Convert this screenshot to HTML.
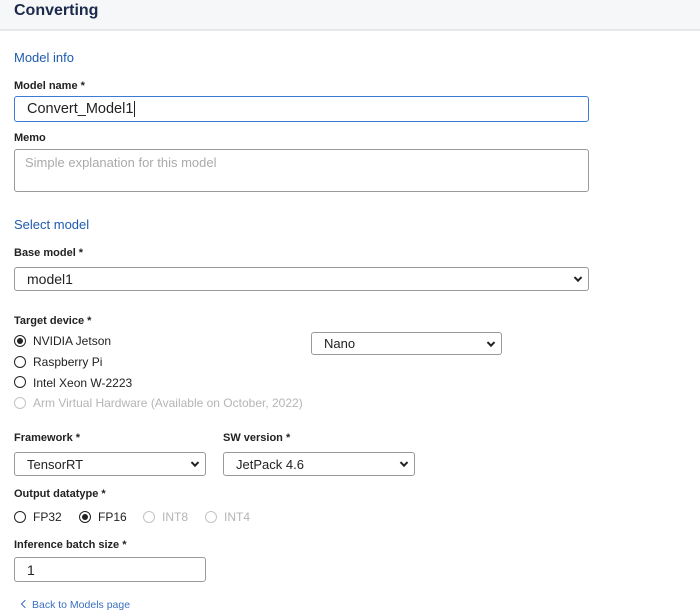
<!DOCTYPE html>
<html><head><style>
body{margin:0;width:700px;height:614px;background:#fff;font-family:"Liberation Sans",Arial,sans-serif;position:relative;overflow:hidden;color:#222}
.a{position:absolute;white-space:nowrap}
.hdr{position:absolute;left:0;top:0;width:700px;height:29px;background:#f6f7f9;border-bottom:2px solid #e6e8ec}
.t{left:14px;top:2px;font-size:16px;font-weight:bold;color:#1b2a4a}
.sec{font-size:13px;color:#1e5bb0}
.lbl{font-size:11px;font-weight:bold;color:#222}
.box{position:absolute;border:1px solid #999;border-radius:3px;box-sizing:border-box;font-size:13px;color:#222;padding-left:12px;display:flex;align-items:center}
.chev{position:absolute;right:7px;top:50%;width:4px;height:4px;border-right:2px solid #222;border-bottom:2px solid #222;transform:translateY(-70%) rotate(45deg)}
.r{position:absolute;width:10px;height:10px;border:1.7px solid #222;border-radius:50%}
.r.on::after{content:"";position:absolute;left:2px;top:2px;width:6px;height:6px;border-radius:50%;background:#222}
.r.dis{border-color:#c4c4c4}
.rt{font-size:12px;color:#222}
.dt{color:#b5b5b5}
</style></head><body>
<div class="hdr"></div>
<div class="a t">Converting</div>
<div class="a sec" style="left:14px;top:50px">Model info</div>
<div class="a lbl" style="left:14px;top:80px">Model name *</div>
<div class="box" style="left:14px;top:96px;width:575px;height:26px;border-color:#3a7bd5;font-size:14.5px">Convert_Model1<span style="display:inline-block;width:1px;height:16px;background:#222;margin-left:1px"></span></div>
<div class="a lbl" style="left:14px;top:132px">Memo</div>
<div class="box" style="left:14px;top:149px;width:575px;height:43px;align-items:flex-start;padding-top:5px;padding-left:10px;color:#aaa">Simple explanation for this model</div>
<div class="a sec" style="left:14px;top:217px">Select model</div>
<div class="a lbl" style="left:14px;top:247px">Base model *</div>
<div class="box" style="left:14px;top:267px;width:575px;height:24px;font-size:14px">model1<span class="chev"></span></div>
<div class="a lbl" style="left:14px;top:315px">Target device *</div>
<div class="r on" style="left:14px;top:335px"></div><div class="a rt" style="left:33px;top:334px">NVIDIA Jetson</div>
<div class="r" style="left:14px;top:356px"></div><div class="a rt" style="left:33px;top:355px">Raspberry Pi</div>
<div class="r" style="left:14px;top:376px"></div><div class="a rt" style="left:33px;top:376px">Intel Xeon W-2223</div>
<div class="r dis" style="left:14px;top:397px"></div><div class="a rt dt" style="left:33px;top:396px">Arm Virtual Hardware (Available on October, 2022)</div>
<div class="box" style="left:311px;top:332px;width:191px;height:23px">Nano<span class="chev"></span></div>
<div class="a lbl" style="left:14px;top:432px">Framework *</div>
<div class="a lbl" style="left:223px;top:432px">SW version *</div>
<div class="box" style="left:14px;top:452px;width:192px;height:24px">TensorRT<span class="chev"></span></div>
<div class="box" style="left:223px;top:452px;width:192px;height:24px">JetPack 4.6<span class="chev"></span></div>
<div class="a lbl" style="left:14px;top:488px">Output datatype *</div>
<div class="r" style="left:14px;top:511px"></div><div class="a rt" style="left:33px;top:510px">FP32</div>
<div class="r on" style="left:79px;top:511px"></div><div class="a rt" style="left:98px;top:510px">FP16</div>
<div class="r dis" style="left:143px;top:511px"></div><div class="a rt dt" style="left:162px;top:510px">INT8</div>
<div class="r dis" style="left:205px;top:511px"></div><div class="a rt dt" style="left:224px;top:510px">INT4</div>
<div class="a lbl" style="left:14px;top:539px">Inference batch size *</div>
<div class="box" style="left:14px;top:557px;width:192px;height:25px;font-size:14px">1</div>
<div class="a" style="left:22px;top:601px;width:5px;height:5px;border-left:1.5px solid #3a6fc0;border-bottom:1.5px solid #3a6fc0;transform:rotate(45deg)"></div>
<div class="a" style="left:32px;top:599px;font-size:10.5px;color:#3a6fc0">Back to Models page</div>
</body></html>
